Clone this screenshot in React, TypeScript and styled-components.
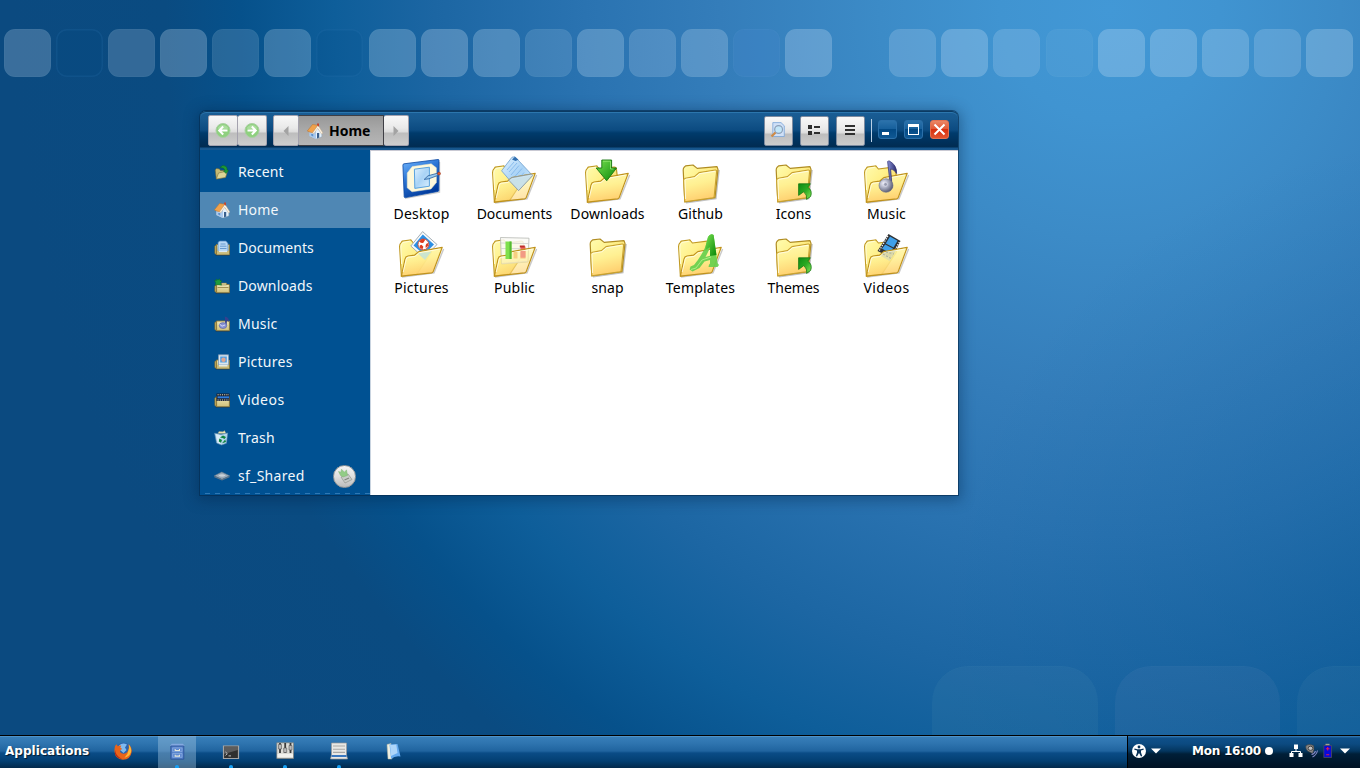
import React from 'react';
import styled, { createGlobalStyle, css } from 'styled-components';

const Global = createGlobalStyle`
  *, *::before, *::after { box-sizing: border-box; }
  html, body { margin: 0; padding: 0; overflow: hidden; }
  body { font-family: 'Noto Sans', sans-serif; font-size: 14px; color: #000; }
  svg { display: block; flex: none; }
`;

const Screen = styled.div`
  position: relative;
  display: flex;
  flex-direction: column;
  width: 1360px;
  height: 768px;
  overflow: hidden;
`;

const Wallpaper = styled.main`
  flex: 1;
  min-height: 0;
  display: flex;
  flex-direction: column;
  justify-content: space-between;
  padding-top: 29px;
  background:
    radial-gradient(circle at 1440px 640px, rgba(0, 82, 142, .3), rgba(0, 82, 142, 0) 500px),
    radial-gradient(
      circle at 1110px 10px,
      #4298d6 0, #4094d1 110px, #3c8bc7 230px, #347dba 390px, #2a73b1 525px,
      #1c66a3 675px, #0e5e9a 775px, #06518b 870px, #0a4b81 945px, #0b4a80 1100px
    );
`;

const Tiles = styled.div`
  display: flex;
  gap: 5.08px;
  padding-left: 4px;
`;

const Tile = styled.div<{ $tint: string; $outlined?: boolean; $empty?: boolean }>`
  flex: none;
  width: 47px;
  height: 48px;
  border-radius: 11px;
  visibility: ${p => (p.$empty ? 'hidden' : 'visible')};
  background: ${p => p.$tint};
  box-shadow: ${p => (p.$outlined ? 'inset 0 0 0 1.5px rgba(70,140,200,.13)' : 'inset 0 0 0 1px rgba(130,190,215,.05)')};
`;

const BigTiles = styled.div`
  display: flex;
  gap: 17px;
  padding-left: 932px;
  overflow: hidden;
`;

const BigTile = styled.div<{ $tint: string }>`
  flex: none;
  width: 165.5px;
  height: 69px;
  border-radius: 36px 36px 0 0;
  background: ${p => p.$tint};
  box-shadow: inset 0 1px 0 rgba(110, 180, 210, .04);
`;

/* ---------- file manager window ---------- */

const Window = styled.section`
  position: absolute;
  left: 200px;
  top: 111px;
  width: 758px;
  height: 384px;
  display: flex;
  flex-direction: column;
  border-radius: 6px 6px 0 0;
  box-shadow: 0 0 0 1px rgba(4, 44, 82, .65), 0 2px 14px 3px rgba(3, 35, 70, .4);
`;

const HeaderBar = styled.header`
  flex: none;
  display: flex;
  align-items: center;
  height: 39px;
  padding: 0 9px 0 8px;
  border-radius: 6px 6px 0 0;
  background: linear-gradient(#1a5e96 0, #17598f 8px, #0c4b81 19px, #003b6c 22px, #00305a 31px, #012c52 36px, #14548b 37px, #1a5990 39px);
  box-shadow: inset 0 1px 0 #0b3a63, inset 0 2px 0 #2c76ad;
`;

const ButtonGroup = styled.div`
  display: flex;
  height: 31px;
  margin-right: 6px;
`;

const silver = css`
  background: linear-gradient(#f8f8f8 0, #e9e9e9 12px, #dcdcdc 16px, #bdbdbd 17px, #cfcfcf 30px);
`;

const HeaderButton = styled.button<{ $width?: number; $active?: boolean }>`
  display: flex;
  align-items: center;
  justify-content: center;
  gap: 6px;
  width: ${p => p.$width ?? 30}px;
  height: 31px;
  padding: 0;
  font: bold 14px/20px 'Noto Sans', sans-serif;
  color: #000;
  border: 1px solid #a4a2ae;
  border-radius: 2px;
  ${silver}
  & + & { border-left-width: 0; }
  ${p => p.$active && css`
    justify-content: flex-start;
    padding-left: 8px;
    border-color: #3f3f45;
    border-radius: 0;
    background: linear-gradient(#989898, #a8a8a8 45%, #b6b6b6);
  `}
`;

const ToolButton = styled(HeaderButton)`
  height: 30px;
  padding: 0 1px 1px 0;
  border-color: #7d8ba0;
  && { border-left-width: 1px; }
`;

const Spacer = styled.div`flex: 1;`;

const Gap = styled.div<{ $size: number }>`
  flex: none;
  width: ${p => p.$size}px;
`;

const Tools = styled.div`
  display: flex;
  gap: 7px;
`;

const Divider = styled.div`
  width: 1px;
  height: 23px;
  margin: 0 6px;
  background: #b9d0e6;
`;

const Controls = styled.div`
  display: flex;
  gap: 7px;
  margin-top: -2px;
`;

const ControlButton = styled.button<{ $danger?: boolean }>`
  display: grid;
  place-items: center;
  width: 19px;
  height: 19px;
  padding: 0;
  border-radius: 3px;
  border: 1px solid ${p => (p.$danger ? '#e4714f' : '#2a6fa9')};
  background: ${p => (p.$danger
    ? 'linear-gradient(#ea8765, #e25a38 45%, #d8300f 50%, #e2542f)'
    : 'linear-gradient(#2b72ab, #17609c 45%, #034a85 50%, #0f5894)')};
`;

const WindowBody = styled.div`
  flex: 1;
  min-height: 0;
  display: flex;
`;

const Sidebar = styled.nav`
  display: flex;
  flex-direction: column;
  gap: 2px;
  width: 170px;
  padding-top: 4px;
  background: #005192;
`;

const Place = styled.a<{ $selected?: boolean; $last?: boolean }>`
  display: flex;
  align-items: center;
  height: 36px;
  padding: 0 14px;
  gap: 8px;
  font-size: 14px;
  line-height: 20px;
  color: #f2f7fb;
  background: ${p => (p.$selected ? '#4f87b4' : 'transparent')};
  ${p => p.$last && css`
    background: repeating-linear-gradient(90deg, #2e78b4 0 5px, transparent 5px 10px) 5px 35px / 165px 1px no-repeat;
  `}
`;

const PlaceName = styled.span<{ $spacing: number }>`
  flex: 1;
  letter-spacing: ${p => p.$spacing}px;
`;

const Eject = styled.span`
  display: grid;
  place-items: center;
  width: 23px;
  height: 23px;
  border-radius: 50%;
  border: 1px solid #9b9b9b;
  background: linear-gradient(#f4f4f4, #dedede 50%, #bcbcbc);
`;

const Content = styled.div`
  flex: 1;
  display: grid;
  grid-template-columns: repeat(6, 93px);
  grid-auto-rows: 74px;
  padding: 6px 0 0 4.5px;
  background: #fff;
  box-shadow: inset 0 1px 0 #c9c9d3, inset 1px 0 0 #c9d4e0;
`;

const FileItem = styled.div`
  display: flex;
  flex-direction: column;
  align-items: center;
`;

const FileName = styled.span<{ $spacing: number }>`
  padding-left: 1px;
  font-size: 14px;
  line-height: 20px;
  white-space: nowrap;
  letter-spacing: ${p => p.$spacing}px;
`;

/* ---------- panel ---------- */

const Panel = styled.footer`
  flex: none;
  display: flex;
  height: 33px;
  border-top: 1px solid #000;
  font: bold 12px/16px 'DejaVu Sans', sans-serif;
  color: #fff;
  text-shadow: 1px 1px 1px rgba(0, 0, 0, .65);
`;

const Launchers = styled.div`
  flex: 1;
  display: flex;
  align-items: stretch;
  border-right: 1px solid #000;
  background: linear-gradient(#5a9dd0 0, #367db8 1.5px, #2f75b0 7px, #20649f 15px, #0a4c86 17px, #033f72 25px, #02294b 32px);
`;

const Menu = styled.div`
  width: 104px;
  padding: 6.5px 0 0 5px;
  letter-spacing: .05px;
`;

const Launcher = styled.div<{ $active?: boolean }>`
  position: relative;
  display: grid;
  place-items: center;
  width: 38px;
  margin-right: 16px;
  padding-bottom: 2px;
  background: ${p => (p.$active ? 'rgba(160,195,225,.42)' : 'transparent')};
`;

const RunningDot = styled.i`
  position: absolute;
  left: 17px;
  bottom: 0;
  width: 4px;
  height: 3px;
  border-radius: 2px 2px 0 0;
  background: #16a0f4;
`;

const Status = styled.div`
  display: flex;
  align-items: center;
  width: 232px;
  padding: 0 10px 3px 4px;
  background: linear-gradient(#3c7fb8 0, #0f508a 2px, #0c4a80 8px, #04365f 15px, #001f38 18px, #001224 31px);
`;

const Clock = styled.span`
  margin: 0 3px 0 31px;
  width: 70px;
  white-space: nowrap;
  letter-spacing: -.25px;
`;

/* ---------- icons ---------- */

const Hidden = styled.svg`
  position: absolute;
  width: 0;
  height: 0;
`;

const Gradients = () => (
  <Hidden aria-hidden>
    <defs>
      <linearGradient id="fback" x1="0" y1="0" x2="1" y2="1">
        <stop offset="0" stopColor="#fffcb0" /><stop offset=".4" stopColor="#fff08a" /><stop offset="1" stopColor="#f3c850" />
      </linearGradient>
      <linearGradient id="ffront" x1="0" y1="0" x2=".25" y2="1">
        <stop offset="0" stopColor="#fffbb4" /><stop offset=".5" stopColor="#fff092" /><stop offset="1" stopColor="#ffd070" />
      </linearGradient>
      <linearGradient id="green" x1="0" y1="0" x2="1" y2="1">
        <stop offset="0" stopColor="#78e150" /><stop offset="1" stopColor="#088708" />
      </linearGradient>
      <linearGradient id="linkgreen" x1="0" y1="0" x2="1" y2="1">
        <stop offset="0" stopColor="#0d8a14" /><stop offset=".5" stopColor="#2bab22" /><stop offset="1" stopColor="#8be75a" />
      </linearGradient>
      <linearGradient id="paper" x1="0" y1="0" x2="1" y2="1">
        <stop offset="0" stopColor="#dff1ff" /><stop offset=".5" stopColor="#a9d3f6" /><stop offset="1" stopColor="#d9efff" />
      </linearGradient>
      <linearGradient id="blue" x1="0" y1="0" x2=".5" y2="1">
        <stop offset="0" stopColor="#72b7ff" /><stop offset=".45" stopColor="#2d76d5" /><stop offset="1" stopColor="#003a9c" />
      </linearGradient>
      <linearGradient id="note" x1="0" y1="0" x2="1" y2="0">
        <stop offset="0" stopColor="#8891d4" /><stop offset="1" stopColor="#27276b" />
      </linearGradient>
      <radialGradient id="ball" cx=".35" cy=".35" r=".7">
        <stop offset="0" stopColor="#f5f5ff" /><stop offset=".5" stopColor="#a5a9bd" /><stop offset="1" stopColor="#56586f" />
      </radialGradient>
      <linearGradient id="mini" x1="0" y1="0" x2="0" y2="1">
        <stop offset="0" stopColor="#efe9b8" /><stop offset="1" stopColor="#d0c07a" />
      </linearGradient>
    </defs>
  </Hidden>
);

const OpenBack = () => (
  <>
    <path d="M5 47 37 42.8 46.6 19" fill="none" stroke="#777" strokeOpacity=".4" strokeWidth="1.4" />
    <path d="M4.4 46.2 2.6 16.5Q2.6 14 4.3 12.4L5.2 11.2 12.8 10Q14 9.8 14.8 11L16.4 13 31 11.2Q33 11 33.4 13L34.5 22 20 44Z" fill="url(#fback)" stroke="#c19a25" strokeWidth="1.2" strokeLinejoin="round" />
    <path d="M4.6 34 3.8 17Q3.8 14 6 12.4L12.8 11.3" fill="none" stroke="#fffde0" strokeWidth=".9" />
  </>
);

const OpenFront = ({ opacity = 1 }: { opacity?: number }) => (
  <>
    <path fillOpacity={opacity} d="M4.4 46.2 8 29Q8.5 26.4 11 26L17.5 25.2 21.8 21.6 45.2 17.4 36.2 41.6Q35.8 42.6 34.6 42.8Z" fill="url(#ffront)" stroke="#bf921c" strokeWidth="1.2" strokeLinejoin="round" />
    <path d="M6.2 42 9.2 29.4Q9.6 27.6 11.2 27.3L18 26.4 22.3 22.7 42.8 19" fill="none" stroke="#fffef0" strokeWidth=".8" />
  </>
);

const ClosedFolder = () => (
  <>
    <path d="M10 46.6 39.8 42.6 43 14" fill="none" stroke="#777" strokeOpacity=".45" strokeWidth="1.6" />
    <path d="M8.8 45.8 7.2 14Q7.2 12.4 8.2 11.2L9.6 9.9 17 9 21.2 12.4 41 10.6 42 13.4 39 41.6Z" fill="url(#fback)" stroke="#b08c22" strokeWidth="1.2" strokeLinejoin="round" />
    <path d="M8.8 45.8 7.7 24.3Q7.7 22.6 9.4 22.2L18.4 20.6 23 16.6 39.2 14Q40.8 13.8 40.6 15.6L38.2 40.3Q38 41.6 36.8 41.8Z" fill="url(#ffront)" stroke="#c9a230" strokeWidth="1.1" strokeLinejoin="round" />
    <path d="M9.6 43 9 24.4Q9 23.5 10 23.3L19 21.7 23.6 17.7 39 15.3" fill="none" stroke="#fffef0" strokeWidth=".8" />
  </>
);

const LinkArrow = () => (
  <path d="M29.6 27.8H41.4L38.8 31.2Q43.8 34.5 41.6 40.5L37.6 43.4Q38.4 38.6 34.6 35.8L29.6 39.4Z" fill="url(#linkgreen)" stroke="#157712" strokeWidth=".8" strokeLinejoin="round" />
);

const fileArt: Record<string, React.ReactNode> = {
  Desktop: (
    <>
      <path d="M8 42.4 42.6 36.2V6" fill="none" stroke="#888" strokeOpacity=".4" strokeWidth="1.2" />
      <path d="M5.9 9.2Q5.8 8 7 7.8L41 3.5Q42 3.4 42 4.4L41.8 34.4Q41.8 35.2 41 35.4L8.4 41.6Q7.3 41.7 7.2 40.7Z" fill="url(#blue)" stroke="#0b48a2" strokeWidth=".8" />
      <path d="M15.2 10.6 34.2 7.8 39.4 11.8V26.5L34 33 15 35.8 10.2 31.8V17Z" fill="#fff9dc" stroke="#e4e3c8" strokeWidth=".5" />
      <path d="M17.4 13.2 32.4 11.2V30.2L17.8 32.4Z" fill="url(#paper)" stroke="#4b9adc" strokeWidth=".9" />
      <path d="M27.2 23.4 31 19.8 40.5 17.2 41.2 19.3 31.8 22.8Z" fill="#9acaf0" stroke="#255d9d" strokeWidth=".8" />
      <circle cx="42" cy="17.6" r="1.5" fill="#e8592c" stroke="#8e2f16" strokeWidth=".5" />
    </>
  ),
  Documents: (
    <>
      <OpenBack />
      <path d="M25 .8 42.6 19.6 28.6 34.6 11.6 14.8 22 1.2Z" fill="url(#paper)" stroke="#7ba7d1" strokeWidth=".9" />
      <path d="m22 3.5 3-2.7 3.5 3-3 1.2Z" fill="#3270b1" />
      <path d="m17 14 7-8m-5 10 8-9m-6 12 8-9.5m-5 12 8-9m-5 12 7-8" stroke="#7cb4ea" strokeWidth=".8" />
      <OpenFront opacity={0.6} />
      <path d="M18.5 24 21.8 21.6 41.5 18 42.6 19.6 28.6 34.6Z" fill="#c3def3" fillOpacity=".8" stroke="#8796a2" strokeWidth=".8" />
    </>
  ),
  Downloads: (
    <>
      <OpenBack />
      <OpenFront />
      <path d="M18.8 4H28.6V12H33.6L23.7 24.8 13.2 12H18.8Z" fill="url(#green)" stroke="#16750f" strokeWidth=".9" strokeLinejoin="round" />
      <path d="M20 5.2H27.5V13H30.5" fill="none" stroke="#a4f07f" strokeWidth=".7" />
    </>
  ),
  Github: <ClosedFolder />,
  Icons: <><ClosedFolder /><LinkArrow /></>,
  Music: (
    <>
      <OpenBack />
      <OpenFront />
      <path d="M25.6 5.6Q26 4.6 27.4 5 35 9 34.6 17.5 32 13 28.6 13L30.2 31.6 28.6 32Z" fill="url(#note)" stroke="#2c2c74" strokeWidth=".7" />
      <ellipse cx="24" cy="29.5" rx="7" ry="6.8" fill="url(#ball)" stroke="#6d7088" strokeWidth=".6" />
      <circle cx="23.6" cy="28.4" r="1.9" fill="#9a9db1" stroke="#dcdfee" strokeWidth=".7" />
    </>
  ),
  Pictures: (
    <>
      <OpenBack />
      <path d="M25.6 1.6 40 14.5 27 28 13.8 16Z" fill="#f6fafc" stroke="#9aa4ac" strokeWidth=".9" />
      <path d="M25.8 4.5 37 14.5 27 24.5 16.5 15.5Z" fill="#2b8fe5" />
      <circle cx="26.4" cy="14.4" r="5.4" fill="#fff" stroke="#d33b1d" strokeWidth=".8" />
      <path d="M22.2 11.5q3-3.600 6-1.800l-1.800 3q-2.700.9-4.200-1.200ZM23.200 18q-1.800-2.700 1.300-3.200l1.900 1.900-1 2.600Zm5.600 0q-1-3.600 1.800-5 1.900 2.700-1.800 5Z" fill="#de3b1e" />
      <OpenFront opacity={0.95} />
      <path d="M21 23.5 34.5 21.5 28 30Z" fill="#b9e0df" fillOpacity=".75" />
    </>
  ),
  Public: (
    <>
      <OpenBack />
      <path d="M10.5 7.5 39 8.2 38 32 11.5 34Z" fill="#fbfbf6" fillOpacity=".88" stroke="#b5b8b2" strokeWidth=".8" />
      <path d="M11 13 39 13.6M11 18.5 38.5 18.7" stroke="#cdd1cd" strokeWidth=".8" />
      <path d="M30.5 16.5H35.5V28.5H30.5Z" fill="#ee6a5e" /><path d="M29.8 15.5h5v2h-5z" fill="#bf2e2c" />
      <OpenFront opacity={0.62} />
      <path d="M15.5 11.5H21.5V29H15.5Z" fill="#7fe04c" /><path d="M19.5 11.5H21.5V29H19.5Z" fill="#55b833" />
      <path d="M23.5 22H27.5V28.5H23.5Z" fill="#f7cf80" />
      <path d="M30.5 21H35.5V27.5H30.5Z" fill="#f29a84" />
      <path d="M12 33.5 37 31.5" stroke="#e8e0b8" strokeWidth=".8" />
    </>
  ),
  snap: <ClosedFolder />,
  Templates: (
    <>
      <OpenBack />
      <OpenFront />
      <path fillRule="evenodd" d="M32 7Q34.5 3 37.6 5L41.5 33 43 35 41.5 37H32.500L33 34.8 34 33.5V30L28.5 31.5 23.5 38 16.5 41.500 13.600 39.5 14.500 36.500 18 35Q25.500 26 29.5 16.500ZM29.500 27 34 25.700V18Z" fill="#66cf4d" fillOpacity=".92" />
      <path d="M32 7Q34.500 3 37.600 5L40.500 25 34 26V17L29.500 20 29.500 16.500Z" fill="url(#green)" />
      <path d="m15 39.5 5-1.500 6-8 9-3" fill="none" stroke="#b9f390" strokeWidth=".8" />
    </>
  ),
  Themes: <><ClosedFolder /><LinkArrow /></>,
  Videos: (
    <>
      <OpenBack />
      <path d="M26.5 4 38.5 11 30 28 15.5 21Z" fill="#2f3133" />
      <path d="M28 6.5 35.5 10.8 31.5 17.5 23.8 13.5ZM23.2 14.5 31 18.5 28.5 23 20 18.8Z" fill="#3fa0ea" />
      <path d="M25.9 6 17.2 20.8M37.4 12 29 27" stroke="#fff" strokeWidth="1.200" strokeDasharray="1.300 1.300" />
      <OpenFront opacity={0.88} />
      <path d="M21 22.5 34 20.5 27.5 31 19 26Z" fill="#d3d5b5" fillOpacity=".6" />
      <path d="m21 24 9 5m-6-7 8 2" stroke="#aab0a0" strokeWidth="1.100" strokeDasharray="2 1.500" />
    </>
  ),
};

const FileIcon = ({ name }: { name: string }) => (
  <svg width="48" height="48" viewBox="0 0 48 48">{fileArt[name]}</svg>
);

const House = () => (
  <>
    <path d="M2.5 8.5 5.5 5 10.5 5.5 14.8 10V13.8L9 16 2.5 13Z" fill="#e4f0fb" stroke="#8fa6bf" strokeWidth=".5" />
    <path d="M2.5 8.5 5.5 10.5 9 7V16L2.5 13Z" fill="#a9c9ee" />
    <path d="M.3 8 5.5 1.5 11 2.2 5.8 9.8 3.2 9.2Z" fill="#f0a24c" stroke="#b8722c" strokeWidth=".5" />
    <path d="M11 2.2 15.9 10 14.6 11 10.7 5.4 6.8 10.8 5.6 10Z" fill="#fbf3e4" stroke="#c2a27c" strokeWidth=".4" />
    <path d="M10 .6h2v3.200l-2-1.500Z" fill="#c5472e" />
    <path d="M10 10h2.200v4.600l-2.200.9Z" fill="#3b608d" />
    <path d="M4.200 11h2v2.400l-2-.8Z" fill="#5f93cc" />
  </>
);

const MiniFolder = ({ y = 5 }: { y?: number }) => (
  <>
    <path d={`M.8 ${y + 1.5} 3 ${y}V15L.8 13.500Z`} fill="#c9b160" stroke="#74602a" strokeWidth=".6" />
    <path d={`M2.600 ${y}H14.800Q15.400 ${y} 15.400 ${y + 0.6}V14.800H2.600Z`} fill="url(#mini)" stroke="#8a7434" strokeWidth=".9" />
    <path d="M1.500 15.600H15.500" stroke="#17304c" strokeOpacity=".6" strokeWidth=".8" />
  </>
);

const placeArt: Record<string, React.ReactNode> = {
  Recent: (
    <>
      <path d="M1.200 6 2.500 4.500 5.500 5 6.500 6.500 12.500 6.500 11.500 13 2.300 15Z" fill="#c5ba74" stroke="#6e6734" strokeWidth=".6" />
      <path d="M2.300 15 4.500 9 13.600 7 11.500 13.500Z" fill="#ddd596" stroke="#7d7440" strokeWidth=".6" />
      <path d="M6 3.500Q8.500 .2 11.800 2.300 13.400 3.600 13.200 6L14.600 6.500 12 9.500 9.500 7 11 6.500Q10.500 3.500 6 3.500Z" fill="#1d9a35" stroke="#0c6122" strokeWidth=".5" />
    </>
  ),
  Home: <House />,
  Documents: (
    <>
      <MiniFolder y={4.5} />
      <path d="M5.500 1H12L14 3.500V12H4V2.500Z" fill="#b9d9f6" stroke="#4b82bd" strokeWidth=".7" />
      <path d="M6.500 4H11.500M6 6.200H12.500M6 8.500H12.500" stroke="#5d92ca" strokeWidth=".9" />
      <path d="M3 11H15V14.400H3Z" fill="#cabb7a" /><path d="M5 11.500H13" stroke="#dbeaf6" strokeWidth="1.200" />
    </>
  ),
  Downloads: (
    <>
      <MiniFolder y={6.5} />
      <path d="M3.500 9.500H14.500" stroke="#9a894d" strokeWidth=".9" /><path d="M7.500 5H12.500V7H7.500Z" fill="#d8cf9c" stroke="#86783c" strokeWidth=".5" />
      <path d="M.5 2.500 2.500 2.500 2 1 4 2 5.500.8 6 2.500 8 3 6.500 4.500 7.500 7.300 4 6.800 1 7 1.800 5Z" fill="#1f9a3c" stroke="#0d6429" strokeWidth=".4" />
    </>
  ),
  Music: (
    <>
      <MiniFolder y={5} />
      <path d="M10.800.6Q15.500 1.500 14.800 6L13 4.500 12.500 9.500 11.300 9.500Z" fill="#34408f" />
      <ellipse cx="9" cy="9.600" rx="3.800" ry="3" fill="#8791d4" stroke="#4b5397" strokeWidth=".5" />
      <path d="M5.500 8 8 10.200 11 9" stroke="#d4d9f8" fill="none" />
    </>
  ),
  Pictures: (
    <>
      <MiniFolder y={6} />
      <path d="M4.500.8H14.500V11H4.500Z" fill="#dbe7f0" stroke="#7f9ab5" strokeWidth=".8" />
      <path d="M6.200 2.500H12.800V8.500H6.200Z" fill="#4f9fe4" /><circle cx="9.500" cy="5.800" r="2.200" fill="#dfa592" />
      <path d="M3 11H15V14.400H3Z" fill="#cabb7a" />
      <path d="M5 11.800H13.500" stroke="#e9f2f8" strokeWidth="1.300" />
    </>
  ),
  Videos: (
    <>
      <MiniFolder y={4.5} />
      <path d="M2.500 1.500H15.500V9H2.500Z" fill="#141d30" />
      <path d="M3.500 5.300H15" stroke="#2f7ddc" strokeWidth="2" />
      <path d="M3.500 2.800H15M3.500 8H15" stroke="#e9e4c4" strokeDasharray="1.200 1" />
    </>
  ),
  Trash: (
    <>
      <path d="M3.800 3.500 5 1.500 9 1.800 10.500.6 12 3.500Z" fill="#ebe5b4" stroke="#95997d" strokeWidth=".4" />
      <path d="M.6 3.200 7 4.600 13.700 3 12.400 13.300 7.500 15 2.600 13Z" fill="#b4d5ec" stroke="#5f90b3" strokeWidth=".6" />
      <path d="M1.800 4 6.500 5.300 6.500 14 3.500 12.500Z" fill="#e0f0fa" fillOpacity=".8" />
      <path d="M6 7.500 9 5.500 12 7 10.500 9 8.500 8ZM4.800 11.500 5.300 8.500 8 10 7 12.800ZM8 13.200 11.200 9.500 12 12Z" fill="#0d8540" />
    </>
  ),
  sf_Shared: (
    <>
      <path d="M.3 7.800 7.800 4 15.600 7.800 8 11.400Z" fill="#a3b0bc" stroke="#5d7388" strokeWidth=".6" />
      <path d="M.3 8 8 11 15.600 8V9.300L8 12.600 .3 9.300Z" fill="#5d7489" />
      <ellipse cx="8" cy="7.500" rx="3.800" ry="1.700" fill="#cbd3da" stroke="#71869a" strokeWidth=".5" />
    </>
  ),
};

const PlaceIcon = ({ name }: { name: string }) => (
  <svg width="16" height="16" viewBox="0 0 16 16">{placeArt[name]}</svg>
);

const RoundArrow = ({ flip }: { flip?: boolean }) => (
  <svg width="16" height="16" viewBox="0 0 16 16">
    <g transform={flip ? 'translate(16 0) scale(-1 1)' : undefined}>
      <circle cx="8" cy="7.500" r="7" fill="#8fd07f" stroke="#a9cfa2" />
      <path d="M2.500 5.500a6 6 0 0 1 11 0Q8 7.500 2.500 5.500Z" fill="#b5e2a9" fillOpacity=".7" />
      <path d="M12.500 7.500H4.500M8.200 3.500 4.200 7.500l4 4" fill="none" stroke="#fff" strokeWidth="2" />
    </g>
  </svg>
);

const Caret = ({ left }: { left?: boolean }) => (
  <svg width="6" height="10" viewBox="0 0 6 10">
    <path d={left ? 'M5.500 0V10L.5 5Z' : 'M.5 0V10L5.500 5Z'} fill="#a3a3a3" />
  </svg>
);

const Down = () => (
  <svg width="10" height="6" viewBox="0 0 10 6"><path d="M0 .5H10L5 5.500Z" fill="#fff" /></svg>
);

const launcherArt: Record<string, React.ReactNode> = {
  firefox: (
    <>
      <circle cx="9.500" cy="8.500" r="7.800" fill="#2b63ad" />
      <path d="M5 3.500Q8.500 0 13 2.500L11 5.500 12.500 8 9.500 11 6 8Z" fill="#7fbaf0" />
      <path d="M1 4 2.500 2.200 3.800 4.300Q5 3.200 7.300 3.800L6.300 5.500 8.300 7 6.300 8 6 10Q8.500 12.800 12.500 10.800 15.800 7.800 14.500 2 18 5 17.700 10 16.500 17.500 9 17.700 1 17 .5 9.500.4 6.500 1 4Z" fill="#e8641b" />
      <path d="M14.800 2.600Q18 6.500 16.900 10.500 15 15 10.500 15.700 14 12.500 14.300 9 15.500 6 14.800 2.600Z" fill="#fbb93a" />
      <path d="M1.200 8Q1.500 14 8 17 3 16.500 1 12Z" fill="#b32818" />
    </>
  ),
  files: (
    <g transform="translate(1.600 1.200) scale(.86 .94)">
      <path d="M2.500 .5H15.500L17.500 3H.5Z" fill="#84a9e0" />
      <path d="M1.500 3H16.500V17H1.500Z" fill="#5380c8" stroke="#2d539b" />
      <path d="M3.500 5H14.500V9H3.500ZM3.500 11H14.500V15H3.500Z" fill="#5f8ad0" stroke="#8fb0e4" strokeWidth=".8" />
      <path d="M6.500 6.300V7.800H11.500V6.300M6.500 12.300V13.800H11.500V12.300" fill="none" stroke="#e6e8da" strokeWidth="1.200" />
    </g>
  ),
  terminal: (
    <>
      <path d="M1.500 4H16.500V16.500H1.500Z" fill="#30302f" stroke="#a5a5a5" strokeWidth="1.200" />
      <path d="M2.100 4.600H15.900V8L2.100 12Z" fill="#686868" fillOpacity=".8" />
      <path d="M3.500 10 5.300 11.700 3.500 13.400M6.500 13.900H9" fill="none" stroke="#d0d0d0" strokeWidth=".9" />
    </>
  ),
  mixer: (
    <>
      <path d="M.8.8H17.500V16.500H.8Z" fill="#dcdcd7" stroke="#83837d" strokeWidth=".7" />
      <path d="M4 1V11M9.200 1V11M14.500 1V11" stroke="#3c3c3c" strokeWidth="1.800" />
      <path d="M2.500 2.500H5.500V7H2.500ZM7.700 6H10.700V10.500H7.700ZM13 3.500H16V8H13Z" fill="#b9b9b9" stroke="#555" strokeWidth=".6" />
      <path d="M1.500 13.500H17" stroke="#f2f2ee" strokeWidth="3" />
    </>
  ),
  editor: (
    <>
      <path d="M1.500 1H16.500V13L17.500 17H.5L1.500 13Z" fill="#e8e8e5" stroke="#999" strokeWidth=".7" />
      <path d="M3 4H15M3 7.200H15M3 10.400H15" stroke="#a8a8a6" strokeWidth="1.100" />
      <path d="M1.500 14H16.500" stroke="#3978c0" strokeWidth="2" />
    </>
  ),
  notes: (
    <>
      <path d="M3 2.500 7 1.500 8 17H4Z" fill="#f0f0e2" stroke="#b5b59e" strokeWidth=".5" />
      <path d="M5.500 2.500 13.500 2 16.500 14.500Q11 13.500 7 17Z" fill="#64a9ee" />
      <path d="M6 3 12.300 2.500 13.500 11 7 14Z" fill="#bfe0fb" fillOpacity=".8" />
    </>
  ),
};

/* Opacity of each wallpaper tile, or the name of a special variant. */
const tileTints: (number | 'outline' | 'blue' | 'empty')[] = [
  .22, 'outline', .19, .25, .15, .22, 'outline', .23, .25, .23, .14, .23, .18, .21, 'blue', .24,
  'empty', .18, .24, .17, .06, .24, .24, .21, .18, .23,
];

const tileColor = (t: number | string) => {
  if (t === 'outline') return 'rgba(0,70,130,.12)';
  if (t === 'blue') return 'rgba(70,136,206,.3)';
  return `rgba(226,240,255,${t === 'empty' ? 0 : t})`;
};

const places = [
  { name: 'Recent', spacing: 0.15 },
  { name: 'Home', spacing: 0.2 },
  { name: 'Documents', spacing: 0.03 },
  { name: 'Downloads', spacing: 0.15 },
  { name: 'Music', spacing: 0.2 },
  { name: 'Pictures', spacing: 0.25 },
  { name: 'Videos', spacing: 0.5 },
  { name: 'Trash', spacing: 0.2 },
  { name: 'sf_Shared', spacing: 0.3 },
];

const files = [
  { name: 'Desktop', spacing: 0.25 },
  { name: 'Documents', spacing: 0.03 },
  { name: 'Downloads', spacing: 0.12 },
  { name: 'Github', spacing: 0 },
  { name: 'Icons', spacing: 0 },
  { name: 'Music', spacing: 0.1 },
  { name: 'Pictures', spacing: 0.25 },
  { name: 'Public', spacing: 0.2 },
  { name: 'snap', spacing: 0.1 },
  { name: 'Templates', spacing: 0.2 },
  { name: 'Themes', spacing: 0.03 },
  { name: 'Videos', spacing: 0.4 },
];

const launchers = [
  { name: 'firefox' },
  { name: 'files', active: true, running: true },
  { name: 'terminal', running: true },
  { name: 'mixer', running: true },
  { name: 'editor', running: true },
  { name: 'notes' },
];

export default function App() {
  return (
    <Screen>
      <Global />
      <Gradients />
      <Wallpaper>
        <Tiles>
          {tileTints.map((t, i) => (
            <Tile key={i} $tint={tileColor(t)} $outlined={t === 'outline'} $empty={t === 'empty'} />
          ))}
        </Tiles>
        <BigTiles>
          <BigTile $tint="rgba(110,170,190,.09)" />
          <BigTile $tint="rgba(140,160,200,.09)" />
          <BigTile $tint="rgba(130,160,190,.08)" />
        </BigTiles>
      </Wallpaper>

      <Window>
        <HeaderBar>
          <ButtonGroup>
            <HeaderButton><RoundArrow /></HeaderButton>
            <HeaderButton $width={29}><RoundArrow flip /></HeaderButton>
          </ButtonGroup>
          <ButtonGroup>
            <HeaderButton $width={26}><Caret left /></HeaderButton>
            <HeaderButton $width={85} $active>
              <svg width="16" height="16" viewBox="0 0 16 16"><House /></svg>
              Home
            </HeaderButton>
            <HeaderButton $width={25}><Caret /></HeaderButton>
          </ButtonGroup>
          <Spacer />
          <Tools>
            <ToolButton $width={29}>
              <svg width="16" height="16" viewBox="0 0 16 16">
                <path d="M2.800.6H11L14.300 3.800V14.500H2.800Z" fill="#cfe0f7" stroke="#7aa4d8" strokeWidth=".8" />
                <circle cx="8.600" cy="7.500" r="3.900" fill="#c2e6f8" stroke="#8b9fb8" strokeWidth="1.200" />
                <path d="M5.500 10.500 1.500 14.600" stroke="#cf8a45" strokeWidth="2.200" />
              </svg>
            </ToolButton>
            <ToolButton $width={29}>
              <svg width="16" height="16" viewBox="0 0 16 16">
                <path d="M2 3H6V7H2ZM2 9H6V13H2ZM8 4H14V6H8ZM8 10H14V12H8Z" fill="#2e2e2e" />
              </svg>
            </ToolButton>
            <ToolButton $width={29}>
              <svg width="16" height="16" viewBox="0 0 16 16">
                <path d="M3 3H13V5H3ZM3 7H13V9H3ZM3 11H13V13H3Z" fill="#2e2e2e" />
              </svg>
            </ToolButton>
          </Tools>
          <Divider />
          <Controls>
            <ControlButton>
              <svg width="17" height="17" viewBox="0 0 17 17"><path d="M3 11H10V14H3Z" fill="#fff" /></svg>
            </ControlButton>
            <ControlButton>
              <svg width="17" height="17" viewBox="0 0 17 17"><path fillRule="evenodd" d="M3 3H14V14H3ZM4 6V13H13V6Z" fill="#fff" /></svg>
            </ControlButton>
            <ControlButton $danger>
              <svg width="17" height="17" viewBox="0 0 17 17"><path d="M3.500 3.500 13.500 13.500M13.500 3.500 3.500 13.500" stroke="#fff" strokeWidth="2" /></svg>
            </ControlButton>
          </Controls>
        </HeaderBar>
        <WindowBody>
          <Sidebar>
            {places.map((p, i) => (
              <Place key={p.name} $selected={p.name === 'Home'} $last={i === places.length - 1}>
                <PlaceIcon name={p.name} />
                <PlaceName $spacing={p.spacing}>{p.name}</PlaceName>
                {p.name === 'sf_Shared' && (
                  <Eject>
                    <svg width="16" height="16" viewBox="0 0 16 16">
                      <path d="M4 9 11 6 15 11.500 8 15Z" fill="#c9ccc9" stroke="#92958f" strokeWidth=".7" />
                      <path d="M7.500 12 12 10" stroke="#83867f" strokeWidth="1.200" />
                      <path d="M1.500 3.500 4 4.200 4.500 1.200 7.500 4.200 9.500 1.800 10.500 7.500 6 9 3.500 7.500Z" fill="#92cc86" stroke="#78ab70" strokeWidth=".4" />
                    </svg>
                  </Eject>
                )}
              </Place>
            ))}
          </Sidebar>
          <Content>
            {files.map(f => (
              <FileItem key={f.name}>
                <FileIcon name={f.name} />
                <FileName $spacing={f.spacing}>{f.name}</FileName>
              </FileItem>
            ))}
          </Content>
        </WindowBody>
      </Window>

      <Panel>
        <Launchers>
          <Menu>Applications</Menu>
          {launchers.map(l => (
            <Launcher key={l.name} $active={l.active}>
              <svg width="18" height="18" viewBox="0 0 18 18">{launcherArt[l.name]}</svg>
              {l.running && <RunningDot />}
            </Launcher>
          ))}
        </Launchers>
        <Status>
          <svg width="14" height="14" viewBox="0 0 14 14">
            <circle cx="7" cy="7" r="7" fill="#fff" />
            <circle cx="7" cy="3" r="1.400" fill="#0a3358" />
            <path d="M2.500 4.500 5.500 5.300H8.500L11.500 4.500 11.700 5.700 9 6.600V8.500L10.200 12 9 12.500 7 9 5 12.500 3.800 12 5 8.500V6.600L2.300 5.700Z" fill="#0a3358" />
          </svg>
          <Gap $size={5} />
          <Down />
          <Clock>Mon 16:00</Clock>
          <svg width="8" height="8" viewBox="0 0 8 8"><circle cx="4" cy="4" r="4" fill="#fff" /></svg>
          <Spacer />
          <svg width="44" height="16" viewBox="0 0 44 16">
            <path d="M5 1.500H9V6H5ZM.5 10H4.500V14H.5ZM9.500 10H13.500V14H9.500Z" fill="#fff" />
            <path d="M7 6V8.500M2.500 10V8.500H11.500V10" fill="none" stroke="#fff" />
            <path d="M17 2.500Q20 .5 24.500 2.500 26 6 23.500 10.500L18.500 8Q16 5 17 2.500Z" fill="#8a8a8a" stroke="#3a3a3a" strokeWidth=".6" />
            <ellipse cx="21.500" cy="5.300" rx="2.400" ry="2.100" fill="#c0c0c0" stroke="#444" />
            <path d="M23.500 14Q27.500 12 28.500 7.500M22.500 11.500Q25.500 11 26.500 8" fill="none" stroke="#8488c8" strokeWidth="1.100" />
            <path d="M36.500.8H40.500V3H36.500Z" fill="#a0a094" />
            <path d="M34.800 2.500H42.500V14.500H34.800Z" fill="#0a0ad8" stroke="#4c4c5c" strokeWidth=".8" />
            <path d="M38.700 4V7.500M36.900 5.700H40.500M37.200 11.800H40.200" stroke="#e31b4b" strokeWidth="1.100" />
          </svg>
          <Gap $size={7} />
          <Down />
        </Status>
      </Panel>
    </Screen>
  );
}
